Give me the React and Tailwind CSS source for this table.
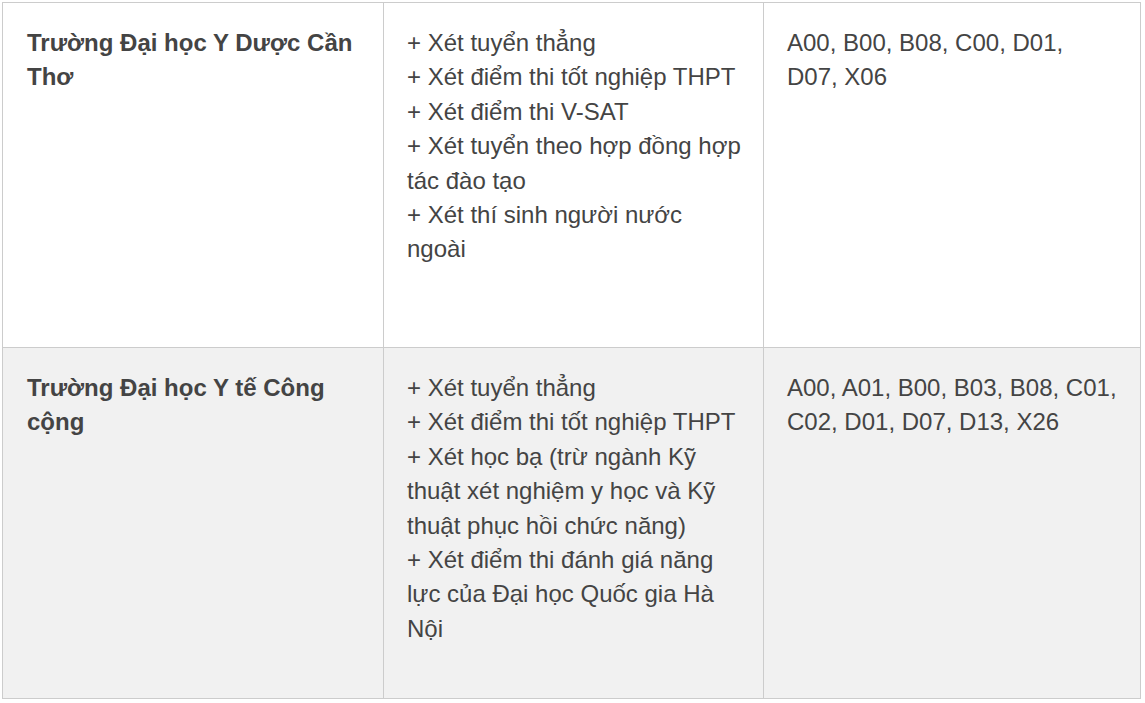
import React from "react";

const rows = [
    {
        school: ["Trường Đại học Y Dược Cần", "Thơ"],
        methods: [
            "+ Xét tuyển thẳng",
            "+ Xét điểm thi tốt nghiệp THPT",
            "+ Xét điểm thi V-SAT",
            "+ Xét tuyển theo hợp đồng hợp",
            "tác đào tạo",
            "+ Xét thí sinh người nước",
            "ngoài",
        ],
        groups: ["A00, B00, B08, C00, D01,", "D07, X06"],
        bg: "bg-white",
        height: "h-[345px]",
    },
    {
        school: ["Trường Đại học Y tế Công", "cộng"],
        methods: [
            "+ Xét tuyển thẳng",
            "+ Xét điểm thi tốt nghiệp THPT",
            "+ Xét học bạ (trừ ngành Kỹ",
            "thuật xét nghiệm y học và Kỹ",
            "thuật phục hồi chức năng)",
            "+ Xét điểm thi đánh giá năng",
            "lực của Đại học Quốc gia Hà",
            "Nội",
        ],
        groups: ["A00, A01, B00, B03, B08, C01,", "C02, D01, D07, D13, X26"],
        bg: "bg-[#f1f1f1]",
        height: "h-[351px]",
    },
];

const Lines = ({ lines }) => (
    <>
        {lines.map((l, i) => (
            <span key={i} className="block whitespace-nowrap">
                {l}
            </span>
        ))}
    </>
);

const App = () => {
    return (
        <div className="bg-white w-[1145px] h-[703px] pt-[2px] pl-[2px] font-['Liberation_Sans',Arial,sans-serif] text-[#444] text-[24px] leading-[34.4px]">
            <table className="border-collapse">
                <tbody>
                    {rows.map((r, i) => (
                        <tr key={i} className={r.bg}>
                            {/* school name */}
                            <td className={`w-[381px] ${r.height} border border-[#ccc] align-top pl-[24px] pr-[20px] pt-[23px] font-bold`}>
                                <Lines lines={r.school} />
                            </td>
                            {/* admission methods */}
                            <td className="w-[380px] border border-[#ccc] align-top pl-[23px] pr-[20px] pt-[23px]">
                                <Lines lines={r.methods} />
                            </td>
                            {/* subject groups */}
                            <td className="w-[377px] border border-[#ccc] align-top pl-[23px] pr-[20px] pt-[23px]">
                                <Lines lines={r.groups} />
                            </td>
                        </tr>
                    ))}
                </tbody>
            </table>
        </div>
    );
};

export default App;
